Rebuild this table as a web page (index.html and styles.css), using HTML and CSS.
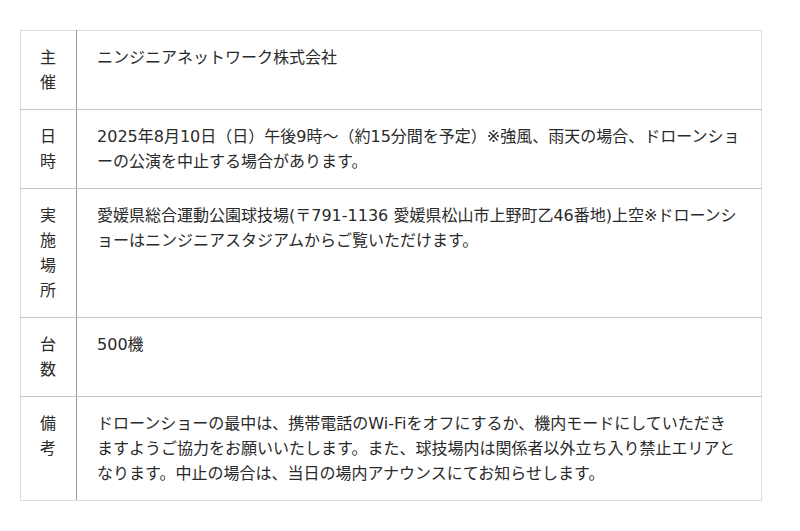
FILE: index.html
```html
<!DOCTYPE html>
<html lang="ja">
<head>
<meta charset="utf-8">
<link rel="stylesheet" href="styles.css">
</head>
<body>
<div class="wrap">
<table class="info">
<tr><th>主催</th><td>ニンジニアネットワーク株式会社</td></tr>
<tr><th>日時</th><td>2025年8月10日（日）午後9時〜（約15分間を予定）※強風、雨天の場合、ドローンショーの公演を中止する場合があります。</td></tr>
<tr><th>実施場所</th><td>愛媛県総合運動公園球技場(〒791-1136 愛媛県松山市上野町乙46番地)上空※ドローンショーはニンジニアスタジアムからご覧いただけます。</td></tr>
<tr><th>台数</th><td>500機</td></tr>
<tr><th>備考</th><td>ドローンショーの最中は、携帯電話のWi-Fiをオフにするか、機内モードにしていただきますようご協力をお願いいたします。また、球技場内は関係者以外立ち入り禁止エリアとなります。中止の場合は、当日の場内アナウンスにてお知らせします。</td></tr>
</table>
</div>
</body>
</html>
```
FILE: styles.css
```css
html, body {
  margin: 0;
  padding: 0;
  background: #fff;
}
body {
  font-family: "DejaVu Sans", "Noto Sans CJK JP", sans-serif;
  font-size: 16px;
  line-height: 25px;
  color: #2a2a2a;
}
.wrap {
  padding: 30px 38px 0 20px;
}
.info {
  width: 742px;
  border-collapse: collapse;
  border: 1px solid #ddd;
}
.info th,
.info td {
  vertical-align: top;
  text-align: left;
  font-weight: normal;
  padding: 14px 20px;
  border-bottom: 1px solid #c4c4c4;
}
.info tr:last-child th,
.info tr:last-child td {
  border-bottom: 1px solid #ddd;
}
.info th {
  width: 16px;
  padding: 14px 20px 14px 19px;
  border-right: 1px solid #999;
  word-break: break-all;
}
.info td {
  padding-left: 20px;
  padding-right: 20px;
}
```
